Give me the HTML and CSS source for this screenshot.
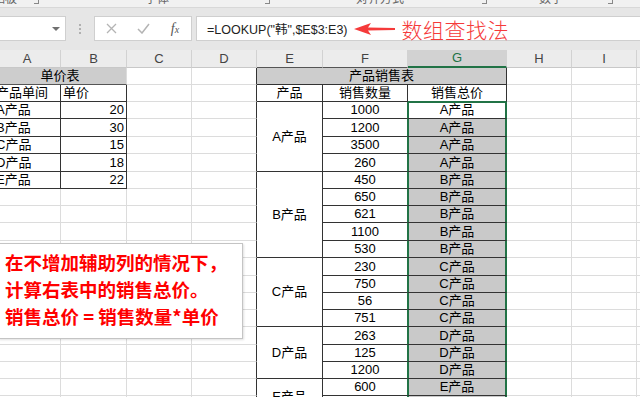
FILE: index.html
```html
<!DOCTYPE html>
<html>
  <head>
    <meta charset="utf-8">
    <title>LOOKUP 数组查找法</title>
    <link rel="stylesheet" href="styles.css">
  </head>
  <body>
    <div class="ribbon">
      <span class="grp g1">剪贴板</span>
      <span class="launch l1"></span>
      <span class="grp g2">字体</span>
      <span class="launch l2"></span>
      <span class="grp g3">对齐方式</span>
      <span class="launch l3"></span>
      <span class="grp g4">数字</span>
      <span class="launch l4"></span>
    </div>

    <div class="fbar">
      <div class="namebox"><span class="caret"></span></div>
      <div class="grip"><i></i><i></i><i></i></div>
      <div class="fbtns">
        <svg width="11" height="11" viewBox="0 0 11 11">
          <path d="M1 1 L10 10 M10 1 L1 10" stroke="#b4b4b4" stroke-width="1.3" fill="none" />
        </svg>
        <svg width="13" height="11" viewBox="0 0 13 11">
          <path d="M1 6 L5 10 L12 1" stroke="#b4b4b4" stroke-width="1.5" fill="none" />
        </svg>
        <span class="fx">f<small>x</small></span>
      </div>
      <div class="formula">
        <span class="ftext">=LOOKUP("韩",$E$3:E3)</span>
        <svg class="arrow" width="42" height="12" viewBox="0 0 42 12">
          <polygon points="0,6 17,0 14,4.6 41,5 41,7 14,7.4 17,12" fill="#f53a3a" />
        </svg>
        <span class="note">数组查找法</span>
      </div>
    </div>

    <table class="sheet">
      <colgroup>
        <col class="w67"><col class="w66"><col class="w65"><col class="w65"><col class="w66">
        <col class="w85"><col class="w99"><col class="w65"><col class="w65"><col class="w60">
      </colgroup>
      <tr class="hd">
        <th>A</th><th>B</th><th>C</th><th>D</th><th class="top">E</th><th class="top">F</th><th class="on">G</th><th>H</th><th>I</th><th></th>
      </tr>
      <tr>
        <td colspan="2" class="ti top c">单价表</td><td></td><td class="edge"></td>
        <td colspan="3" class="ti bd c">产品销售表</td><td></td><td></td><td></td>
      </tr>
      <tr>
        <td class="bd">产品单间</td><td class="bd">单价</td><td></td><td class="edge"></td>
        <td class="bd c">产品</td><td class="bd c">销售数量</td><td class="bd c gtop">销售总价</td><td></td><td></td><td></td>
      </tr>
      <tr>
        <td class="bd">A产品</td><td class="bd n">20</td><td></td><td class="edge"></td>
        <td rowspan="4" class="bd c">A产品</td><td class="bd c fl">1000</td><td class="bd c sel act">A产品</td><td></td><td></td><td></td>
      </tr>
      <tr class="t">
        <td class="bd">B产品</td><td class="bd n">30</td><td></td><td class="edge"></td>
        <td class="bd c fl">1200</td><td class="bd c sel">A产品</td><td></td><td></td><td></td>
      </tr>
      <tr>
        <td class="bd">C产品</td><td class="bd n">15</td><td></td><td class="edge"></td>
        <td class="bd c fl">3500</td><td class="bd c sel">A产品</td><td></td><td></td><td></td>
      </tr>
      <tr class="t">
        <td class="bd">D产品</td><td class="bd n">18</td><td></td><td class="edge"></td>
        <td class="bd c fl">260</td><td class="bd c sel">A产品</td><td></td><td></td><td></td>
      </tr>
      <tr>
        <td class="bd">E产品</td><td class="bd n">22</td><td></td><td class="edge"></td>
        <td rowspan="5" class="bd c">B产品</td><td class="bd c fl">450</td><td class="bd c sel">B产品</td><td></td><td></td><td></td>
      </tr>
      <tr>
        <td></td><td></td><td></td><td class="edge"></td>
        <td class="bd c fl">650</td><td class="bd c sel">B产品</td><td></td><td></td><td></td>
      </tr>
      <tr>
        <td></td><td></td><td></td><td class="edge"></td>
        <td class="bd c fl">621</td><td class="bd c sel">B产品</td><td></td><td></td><td></td>
      </tr>
      <tr class="t">
        <td></td><td></td><td></td><td class="edge"></td>
        <td class="bd c fl">1100</td><td class="bd c sel">B产品</td><td></td><td></td><td></td>
      </tr>
      <tr>
        <td></td><td></td><td></td><td class="edge"></td>
        <td class="bd c fl">530</td><td class="bd c sel">B产品</td><td></td><td></td><td></td>
      </tr>
      <tr class="t">
        <td></td><td></td><td></td><td class="edge"></td>
        <td rowspan="4" class="bd c">C产品</td><td class="bd c fl">230</td><td class="bd c sel">C产品</td><td></td><td></td><td></td>
      </tr>
      <tr>
        <td></td><td></td><td></td><td class="edge"></td>
        <td class="bd c fl">750</td><td class="bd c sel">C产品</td><td></td><td></td><td></td>
      </tr>
      <tr>
        <td></td><td></td><td></td><td class="edge"></td>
        <td class="bd c fl">56</td><td class="bd c sel">C产品</td><td></td><td></td><td></td>
      </tr>
      <tr>
        <td></td><td></td><td></td><td class="edge"></td>
        <td class="bd c fl">751</td><td class="bd c sel">C产品</td><td></td><td></td><td></td>
      </tr>
      <tr class="t">
        <td></td><td></td><td></td><td class="edge"></td>
        <td rowspan="3" class="bd c">D产品</td><td class="bd c fl">263</td><td class="bd c sel">D产品</td><td></td><td></td><td></td>
      </tr>
      <tr>
        <td></td><td></td><td></td><td class="edge"></td>
        <td class="bd c fl">125</td><td class="bd c sel">D产品</td><td></td><td></td><td></td>
      </tr>
      <tr>
        <td></td><td></td><td></td><td class="edge"></td>
        <td class="bd c fl">1200</td><td class="bd c sel">D产品</td><td></td><td></td><td></td>
      </tr>
      <tr>
        <td></td><td></td><td></td><td class="edge"></td>
        <td rowspan="2" class="bd c low">E产品</td><td class="bd c fl">600</td><td class="bd c sel">E产品</td><td></td><td></td><td></td>
      </tr>
      <tr>
        <td></td><td></td><td></td><td class="edge"></td>
        <td class="bd c fl"></td><td class="bd c sel"></td><td></td><td></td><td></td>
      </tr>
    </table>

    <div class="callout">
      在不增加辅助列的情况下，<br>
      计算右表中的销售总价。<br>
      销售总价 = 销售数量*单价
    </div>
  </body>
</html>
```

FILE: styles.css
```css
* {
  box-sizing: border-box;
}

body {
  margin: 0;
  position: relative;
  overflow: hidden;
  background-color: #ffffff;
  font-family: "Liberation Sans", "Noto Sans CJK SC", sans-serif;
  color: #000;
}

/* ribbon group labels, only their lower half shows */
.ribbon {
  height: 8px;
  display: flex;
  align-items: flex-start;
  overflow: hidden;
  background-color: #f1f1f1;
  border-bottom: 1px solid #d8d8d8;
  white-space: nowrap;
}

.grp {
  font-size: 12px;
  line-height: 12px;
  color: #666;
  margin-top: -7px;
}

.g1 { margin-left: -19px; }
.g2 { margin-left: 106px; }
.g3 { margin-left: 86px; }
.g4 { margin-left: 52px; }

.launch {
  width: 5px;
  height: 4px;
  border-right: 1px solid #888;
  border-bottom: 1px solid #888;
}

.l1 { margin-left: 17px; }
.l2 { margin-left: 96px; }
.l3 { margin-left: 78px; }
.l4 { margin-left: 45px; }

/* formula bar */
.fbar {
  height: 42px;
  display: flex;
  padding: 8px 0 9px;
  background-color: #e6e6e6;
}

.namebox,
.fbtns,
.formula {
  height: 25px;
  background-color: #fff;
  border: 1px solid #cfcfcf;
}

.namebox {
  width: 67px;
  margin-left: -1px;
  display: flex;
  align-items: center;
  justify-content: flex-end;
  padding-right: 5px;
}

.caret {
  width: 0;
  height: 0;
  border-left: 4px solid transparent;
  border-right: 4px solid transparent;
  border-top: 4px solid #707070;
}

.grip {
  width: 28px;
  display: flex;
  flex-direction: column;
  align-items: center;
  justify-content: center;
  gap: 2px;
}

.grip i {
  width: 2px;
  height: 2px;
  background-color: #b0b0b0;
}

.fbtns {
  width: 98px;
  display: grid;
  grid-template-columns: repeat(3, 1fr);
  align-items: center;
  justify-items: center;
}

.fx {
  font-family: "Liberation Serif", serif;
  font-style: italic;
  font-size: 14px;
  color: #555;
}

.fx small {
  font-size: 10px;
}

.formula {
  flex: 1;
  margin-left: 4px;
  margin-right: -1px;
  display: flex;
  align-items: center;
  padding-left: 10px;
}

.ftext {
  font-size: 12.5px;
  color: #222;
  white-space: nowrap;
}

.arrow {
  margin-left: 6px;
}

.note {
  margin-left: 6px;
  font-family: "Noto Sans CJK SC", sans-serif;
  font-weight: 300;
  font-size: 21px;
  line-height: 22px;
  color: #f53a3a;
  letter-spacing: 0.5px;
}

/* worksheet */
.sheet {
  margin-left: -6px;
  width: 703px;
  table-layout: fixed;
  border-collapse: separate;
  border-spacing: 0;
  font-size: 13px;
}

.w60 { width: 60px; }
.w65 { width: 65px; }
.w66 { width: 66px; }
.w67 { width: 67px; }
.w85 { width: 85px; }
.w99 { width: 99px; }

.sheet tr {
  height: 17px;
}

.sheet tr.t {
  height: 18px;
}

.sheet tr.hd {
  height: 18px;
}

.sheet th {
  font-weight: normal;
  font-size: 13px;
  line-height: 16px;
  color: #444;
  background-color: #ececec;
  border-right: 1px solid #d2d2d2;
  border-bottom: 1px solid #c8c8c8;
  padding: 0;
}

.sheet th.on {
  background-color: #d2d2d2;
  color: #217346;
  border-bottom: 2px solid #217346;
}

.sheet td {
  padding: 0 2px;
  line-height: 16px;
  white-space: nowrap;
  overflow: hidden;
  border-right: 1px solid #dcdcdc;
  border-bottom: 1px solid #dcdcdc;
}

.c { text-align: center; }
.n { text-align: right; }

.ti {
  background-color: #cdcdcd;
}

.sheet .bd {
  border-right-color: #333;
  border-bottom-color: #333;
}

.sheet .edge {
  border-right-color: #333;
}

.sheet .top {
  border-bottom-color: #555;
}

.sheet .gtop {
  border-bottom-color: #217346;
}

.sheet .fl {
  border-right-color: #217346;
}

.sheet .sel {
  background-color: #c9c9c9;
  border-right-color: #217346;
  box-shadow: inset 1px 0 0 #217346, inset -1px 0 0 #217346;
}

.sheet .act {
  background-color: #fff;
  box-shadow: inset 1px 0 0 #217346, inset -1px 0 0 #217346, inset 0 1px 0 #217346;
}

.sheet .low {
  vertical-align: top;
  padding-top: 10px;
}

/* text box over the sheet */
.callout {
  position: absolute;
  left: -2px;
  top: 243px;
  width: 245px;
  height: 96px;
  padding: 5px 0 0 6px;
  background-color: #fff;
  border: 1px solid #c4c4c4;
  box-shadow: 1px 1px 2px rgba(0, 0, 0, 0.12);
  font-family: "Noto Sans CJK SC", sans-serif;
  font-weight: bold;
  font-size: 18.5px;
  line-height: 27px;
  color: #ff0000;
  white-space: nowrap;
}
```
